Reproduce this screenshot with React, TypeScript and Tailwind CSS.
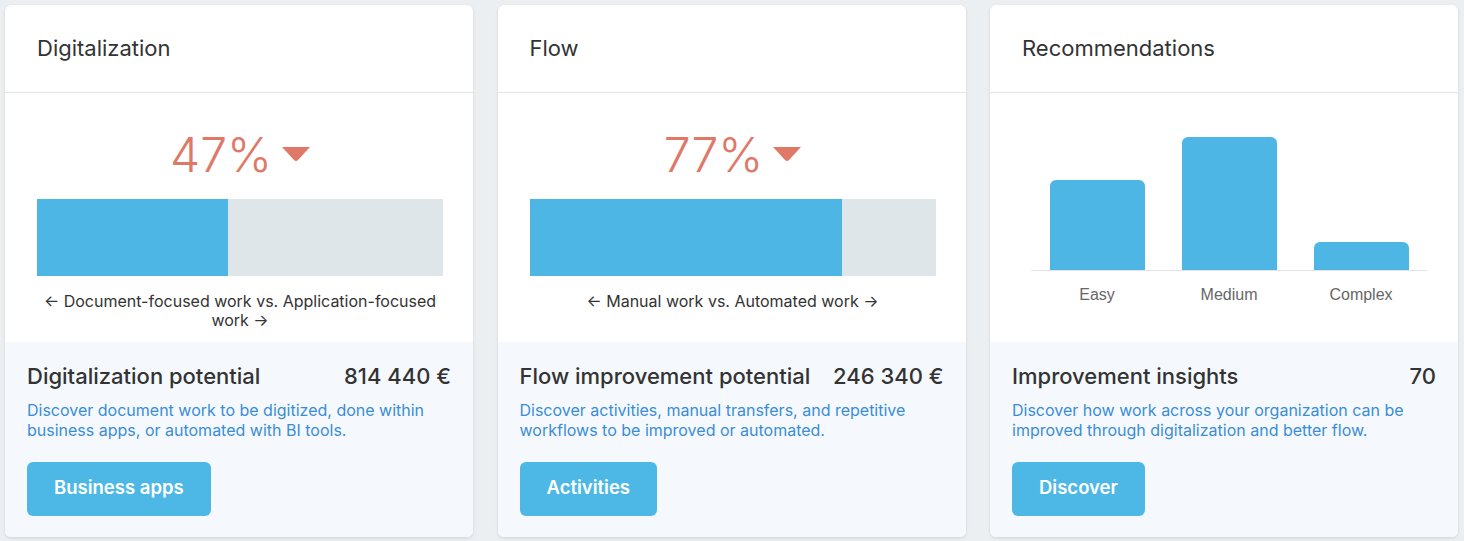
import React from "react";

const font = { fontFamily: "Inter, 'Noto Sans', sans-serif" };

function Caret() {
  return (
    <svg width="28" height="15" viewBox="0 0 28 15" className="ml-[10px] mt-[-2px]">
      <path d="M0 0 H28 L16 13 Q14 15 12 13 Z" fill="#e07868" />
    </svg>
  );
}

function Footer({ title, value, text, button }: { title: string; value: string; text: React.ReactNode; button: string }) {
  return (
    <div className="flex-1 bg-[#f5f9fd] px-[22px] pt-[20px] rounded-b-md">
      <div className="flex items-center justify-between h-[28px]">
        <h3 className="text-[22px] font-medium text-[#333]">{title}</h3>
        <span className="text-[22px] font-medium text-[#333]">{value}</span>
      </div>
      <p className="mt-[10px] text-[16px] leading-[20px] text-[#3a8dd5]">{text}</p>
      <button className="mt-[22px] h-[54px] px-[27px] pb-[3px] rounded-md bg-[#4db8e5] text-white text-[18.5px] font-semibold">
        {button}
      </button>
    </div>
  );
}

function Header({ title }: { title: string }) {
  return (
    <div className="h-[88px] flex items-center pl-8 border-b border-[#e6e6e6]">
      <h2 className="text-[22px] text-[#333]">{title}</h2>
    </div>
  );
}

function PercentCard({ title, pct, label, footer }: { title: string; pct: number; label: string; footer: React.ReactNode }) {
  return (
    <div className="w-[468px] h-[532px] flex flex-col bg-white rounded-md shadow-[0_1px_3px_rgba(0,0,0,0.12)]" style={font}>
      <Header title={title} />
      <div className="h-[249px] pl-8 pr-[30px] pt-[38px]">
        <div className="flex items-center justify-center h-[48px]">
          <span className="text-[48px] leading-[48px] font-light text-[#e07868]">{pct}%</span>
          <Caret />
        </div>
        <div className="mt-[20px] h-[77px] flex bg-[#dfe6e9]">
          <div className="h-full bg-[#4db6e4]" style={{ width: `${pct}%` }} />
        </div>
        <p className="mt-[16px] text-[16px] leading-[19px] text-[#333] text-center">{label}</p>
      </div>
      {footer}
    </div>
  );
}

const bars = [
  { name: "Easy", h: 90 },
  { name: "Medium", h: 133 },
  { name: "Complex", h: 28 },
];

function RecCard() {
  return (
    <div className="w-[468px] h-[532px] flex flex-col bg-white rounded-md shadow-[0_1px_3px_rgba(0,0,0,0.12)]" style={font}>
      <Header title="Recommendations" />
      <div className="h-[249px] pl-[41px] pr-[31px]">
        <div className="h-[178px] flex items-end border-b border-[#e3e3e3]">
          {bars.map((b) => (
            <div key={b.name} className="w-[132px] flex justify-center">
              <div className="w-[95px] bg-[#4db6e4] rounded-t-[6px]" style={{ height: b.h }} />
            </div>
          ))}
        </div>
        <div className="flex mt-[14px]">
          {bars.map((b) => (
            <div
              key={b.name}
              className="w-[132px] text-center text-[16px] leading-[20px] text-[#666]"
              style={{ fontFamily: "'Liberation Sans', Arial, sans-serif" }}
            >
              {b.name}
            </div>
          ))}
        </div>
      </div>
      <Footer
        title="Improvement insights"
        value="70"
        text="Discover how work across your organization can be improved through digitalization and better flow."
        button="Discover"
      />
    </div>
  );
}

export default function App() {
  return (
    <div className="min-h-screen bg-[#eceff2] pl-[5px] pt-[5px] flex gap-[24.5px]">
      <PercentCard
        title="Digitalization"
        pct={47}
        label="← Document-focused work vs. Application-focused work →"
        footer={
          <Footer
            title="Digitalization potential"
            value="814 440 €"
            text="Discover document work to be digitized, done within business apps, or automated with BI tools."
            button="Business apps"
          />
        }
      />
      <PercentCard
        title="Flow"
        pct={77}
        label="← Manual work vs. Automated work →"
        footer={
          <Footer
            title="Flow improvement potential"
            value="246 340 €"
            text="Discover activities, manual transfers, and repetitive workflows to be improved or automated."
            button="Activities"
          />
        }
      />
      <RecCard />
    </div>
  );
}
